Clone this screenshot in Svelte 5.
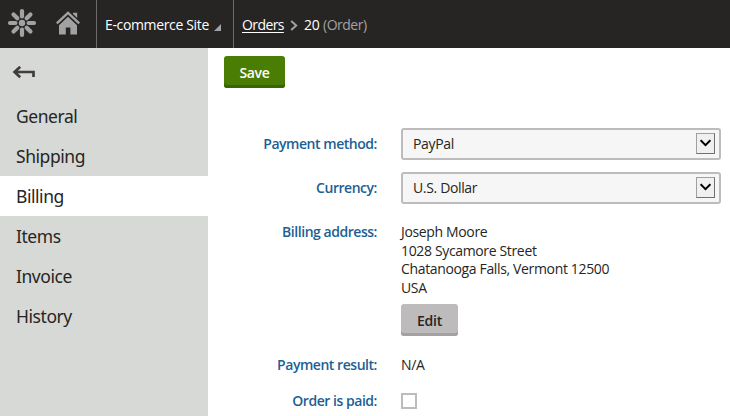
<script>
  const tabs = ['General', 'Shipping', 'Billing', 'Items', 'Invoice', 'History'];
  const active = 'Billing';
  const spokes = [0, 45, 90, 135, 180, 225, 270, 315];
  const address = ['Joseph Moore', '1028 Sycamore Street', 'Chatanooga Falls, Vermont 12500', 'USA'];
</script>

{#snippet dropdown(value)}
  <div class="select">
    <span>{value}</span>
    <i class="drop">
      <svg width="11" height="8" viewBox="0 0 11 8"><path d="M.6 1.2 5.5 6.1 10.4 1.2" fill="none" stroke="#000" stroke-width="2" /></svg>
    </i>
  </div>
{/snippet}

<div class="app">
  <header>
    <div class="icons">
      <svg class="logo" width="30" height="30" viewBox="-15 -15 30 30">
        {#each spokes as angle}
          <path d="M0-6.6V-12" transform="rotate({angle})" />
        {/each}
        <circle r="3.2" />
      </svg>
      <svg class="home" width="24" height="24" viewBox="0 0 24 24">
        <path d="M.8 12.4 12 1.8 23.2 12.4" fill="none" stroke="#a3a2a2" stroke-width="2.3" />
        <path d="M17 1.7h4.2v5.2L17 3z" />
        <path d="M12 5.8 21 14.3V23.5h-6.6v-7H9.8v7H3v-9.2z" />
      </svg>
    </div>
    <div class="site"><span>E-commerce Site</span><svg width="7" height="7" viewBox="0 0 7 7"><path d="M7 0v7H0z" /></svg></div>
    <div class="crumbs">
      <span class="link">Orders</span>
      <svg width="8" height="11" viewBox="0 0 8 11"><path d="M1.2 1 6.2 5.5 1.2 10" /></svg>
      <span class="id">20</span><span class="kind">(Order)</span>
    </div>
  </header>
  <div class="body">
    <nav>
      <div class="back">
        <svg width="24" height="14" viewBox="0 0 24 14"><path d="M21.5 11V6H3M8.2 .8 2.6 6 8.2 11.2" /></svg>
      </div>
      {#each tabs as tab}
        <div class="tab" class:active={tab === active}>{tab}</div>
      {/each}
    </nav>
    <main>
      <button class="save">Save</button>
      <div class="form">
        <div class="row control"><b>Payment method:</b>{@render dropdown('PayPal')}</div>
        <div class="row control second"><b>Currency:</b>{@render dropdown('U.S. Dollar')}</div>
        <div class="row billing">
          <b>Billing address:</b>
          <div class="address">
            {#each address as line}<div>{line}</div>{/each}
            <button class="edit">Edit</button>
          </div>
        </div>
        <div class="row result"><b>Payment result:</b><span>N/A</span></div>
        <div class="row paid"><b>Order is paid:</b><i class="check"></i></div>
      </div>
    </main>
  </div>
</div>

<style>
  .app {
    width: 730px;
    height: 416px;
    overflow: hidden;
    background: #fff;
    color: #262524;
    font: 14px/18.6px "Open Sans", "Noto Sans", sans-serif;
    letter-spacing: -0.35px;
    white-space: nowrap;
  }
  svg { display: block; flex: none; }
  header {
    display: flex;
    height: 48px;
    box-sizing: border-box;
    background: #262524;
    color: #fff;
  }
  .icons {
    display: flex;
    width: 96px;
    box-sizing: border-box;
    padding: 8px 0 0 7px;
    gap: 19px;
  }
  .logo path { stroke: #a3a2a2; stroke-width: 4.2; stroke-linecap: round; fill: none; }
  .logo circle, .home path { fill: #a3a2a2; }
  .home path:first-child { fill: none; }
  .home { margin-top: 3px; }
  .site {
    display: flex;
    align-items: center;
    box-sizing: border-box;
    width: 137px;
    border-left: 1px solid #6c6b6a;
    padding: 3px 0 0 8px;
  }
  .site span { width: 109px; }
  .site svg { margin-top: 4px; }
  .site path { fill: #a3a2a2; }
  .crumbs {
    display: flex;
    align-items: center;
    border-left: 1px solid #6c6b6a;
    padding: 3px 0 0 8px;
  }
  .link { width: 42px; letter-spacing: -0.6px; text-decoration: underline; text-underline-offset: 2px; }
  .crumbs svg { margin: 0 6px 0 6px; }
  .crumbs path { fill: none; stroke: #a3a2a2; stroke-width: 2; }
  .id { width: 19px; }
  .kind { color: #a3a2a2; letter-spacing: -0.5px; }
  .body { display: flex; height: 368px; }
  nav { width: 208px; background: #d6d9d6; }
  .back { height: 48px; box-sizing: border-box; padding: 18px 0 0 12px; }
  .back path { fill: none; stroke: #403e3d; stroke-width: 2.7; }
  .tab {
    height: 40px;
    box-sizing: border-box;
    padding: 1px 0 0 16px;
    font-family: "Noto Sans", "Open Sans", sans-serif;
    font-size: 17.5px;
    line-height: 39px;
    letter-spacing: -0.45px;
  }
  .active { background: #fff; }
  main { flex: 1; padding: 8px 9px 0 16px; }
  button {
    display: block;
    height: 32px;
    box-sizing: border-box;
    border: 0;
    border-radius: 3px;
    padding: 2px 0 0;
    font: 600 14px/26px "Open Sans", "Noto Sans", sans-serif;
    letter-spacing: -0.3px;
  }
  .save { width: 61px; background: #497d04; color: #fff; box-shadow: inset 0 -3px #3a6403; }
  .edit { width: 57px; margin-top: 7px; background: #bdbbbb; color: #262524; box-shadow: inset 0 -3px #a3a2a2; }
  .form { padding-top: 40px; }
  .row { display: flex; gap: 24px; }
  b { width: 153px; text-align: right; font-weight: 600; letter-spacing: -0.46px; color: #1d5f94; }
  .control { height: 32px; align-items: center; }
  .second { margin-top: 12px; }
  .select {
    display: flex;
    flex: 1;
    height: 32px;
    box-sizing: border-box;
    align-items: center;
    justify-content: space-between;
    border: 2px solid #bdbbbb;
    border-radius: 3px;
    padding: 0 4px 0 10px;
    background: #f6f6f6;
  }
  .drop {
    display: flex;
    align-items: center;
    justify-content: center;
    width: 19px;
    height: 21px;
    box-sizing: border-box;
    margin-bottom: 1px;
    border: 1px solid #707070;
    border-top-color: #a0a0a0;
    border-left-color: #a0a0a0;
    background: #f0f0f0;
  }
  .drop svg { margin-bottom: 2px; }
  .billing { margin-top: 19px; }
  .result { margin-top: 20px; }
  .paid { margin-top: 17px; }
  .check { width: 16px; height: 16px; box-sizing: border-box; margin-top: 1px; border: 2px solid #bdbbbb; background: #fff; }
</style>
